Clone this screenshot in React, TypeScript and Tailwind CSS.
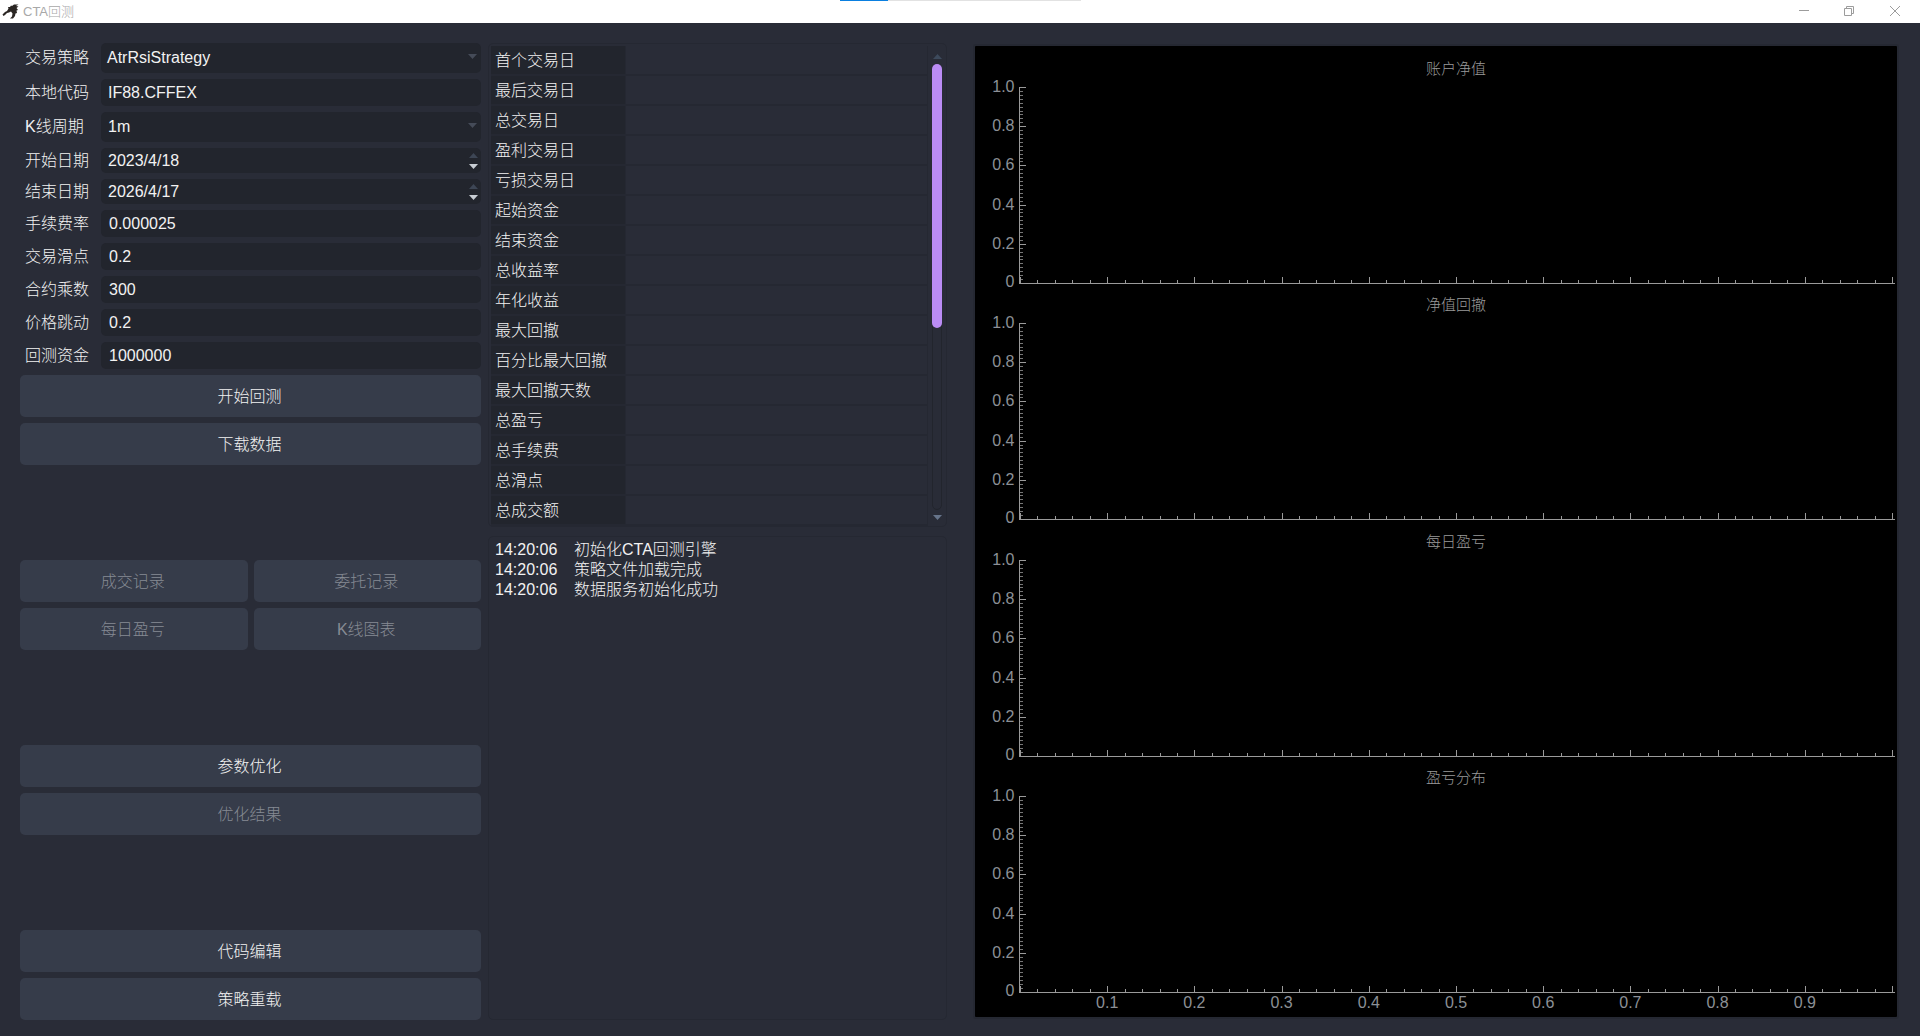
const stats = [
  "首个交易日", "最后交易日", "总交易日", "盈利交易日", "亏损交易日", "起始资金", "结束资金", "总收益率",
  "年化收益", "最大回撤", "百分比最大回撤", "最大回撤天数", "总盈亏", "总手续费", "总滑点", "总成交额",
];

const logs = ["初始化CTA回测引擎", "策略文件加载完成", "数据服务初始化成功"];

const Arrow = ({ down, color }: { down?: boolean; color: string }) => (
  <svg width="9" height="5" viewBox="0 0 9 5">
    <path d={down ? "M0 0h9L4.5 5z" : "M0 5h9L4.5 0z"} fill={color} />
  </svg>
);

// 一行表单：标签 + 输入框
const FormRow = ({
  label,
  value,
  h,
  pad,
  kind,
}: {
  label: string;
  value: string;
  h: string;
  pad: string;
  kind?: "combo" | "spin";
}) => (
  <div className={`flex items-center ${h}`}>
    <div className="w-[81px] pl-[5px]">{label}</div>
    <div className={`flex-1 h-full flex items-center justify-between rounded-[5px] bg-[#22252d] pr-[3px] ${pad}`}>
      <span>{value}</span>
      {kind === "combo" && (
        <span className="mr-[1px] mb-[3px] flex">
          <Arrow down color="#454b58" />
        </span>
      )}
      {kind === "spin" && (
        <span className="flex flex-col gap-[6px]">
          <Arrow color="#3d4655" />
          <Arrow down color="#c8cdd4" />
        </span>
      )}
    </div>
  </div>
);

const Btn = ({ text, disabled }: { text: string; disabled?: boolean }) => (
  <button
    className={`h-[42px] flex-1 rounded-[5px] bg-[#363c4a] pt-[1px] pr-[2px] ${disabled ? "text-[#868b94]" : "text-[#f2f2f2]"}`}
  >
    {text}
  </button>
);

// 一个坐标轴面板，坐标相对面板左上角
const Plot = ({ title, showX, heightClass }: { title: string; showX?: boolean; heightClass: string }) => {
  const x0 = 45;
  const yTop = 41;
  const yBottom = 237;
  const ticks = Array.from({ length: 51 }, (_, i) => i);

  return (
    <div className={`relative ${heightClass}`}>
      <svg width="923" height={showX ? 262 : 238} className="block overflow-visible">
        <text x="481" y="28" textAnchor="middle" fontSize="15" fill="#9a9a9a">
          {title}
        </text>
        <g stroke="#9a9a9a" strokeWidth="1" shapeRendering="crispEdges">
          <line x1={x0 - 0.5} y1={yTop} x2={x0 - 0.5} y2={yBottom + 1} />
          <line x1={x0 - 1} y1={yBottom + 0.5} x2={920} y2={yBottom + 0.5} />
          {ticks.map((i) => {
            const y = Math.round(yBottom - (i * (yBottom - yTop)) / 50) + 0.5;
            const major = i % 10 === 0;
            return <line key={i} x1={x0} y1={y} x2={x0 + (major ? 6 : 3)} y2={y} stroke={major ? "#9a9a9a" : "#767676"} />;
          })}
          {ticks.map((i) => {
            const x = Math.round(x0 + i * 17.44) + 0.5;
            const major = i % 5 === 0;
            return <line key={i} x1={x} y1={yBottom} x2={x} y2={yBottom - (major ? 6 : 3)} />;
          })}
        </g>
        <g fontSize="16" fill="#8c9096">
          {["0", "0.2", "0.4", "0.6", "0.8", "1.0"].map((t, i) => (
            <text key={t} x="39.5" y={i === 0 ? yBottom + 4 : yBottom - i * 39.2 + 5} textAnchor="end">
              {t}
            </text>
          ))}
          {showX &&
            ["0.1", "0.2", "0.3", "0.4", "0.5", "0.6", "0.7", "0.8", "0.9"].map((t, i) => (
              <text key={t} x={x0 + (i + 1) * 87.2} y={yBottom + 15.5} textAnchor="middle">
                {t}
              </text>
            ))}
        </g>
      </svg>
    </div>
  );
};

export default function App() {
  return (
    <div className="w-[1920px] h-[1036px] overflow-hidden flex flex-col bg-[#292c37] text-[16px] font-light leading-[20px] text-[#f2f2f2] font-['Liberation_Sans','Noto_Sans_CJK_SC',sans-serif]">
      {/* 标题栏 */}
      <div className="relative h-[23px] shrink-0 bg-white flex items-center">
        <svg width="17" height="15" viewBox="0 0 17 15" className="ml-[2px]">
          <path
            d="M0.5 10.5 3 8 5 7 6.5 4.5 6 3 8 3 9 1.5 10 2 12 .5 16.5 .5 14 2 16.5 2.5 14.5 4 16 6 14.5 6.5 15 9 13.5 9.5 13 12 11 14.5 8 14.5 10 12.5 10.5 9.5 9 7.5 7 8.5 5 9 3 11 1.5 12z"
            fill="#2b2623"
          />
        </svg>
        <span className="ml-[4px] text-[13px] text-[#a8a8a8]">CTA回测</span>
        <div className="absolute top-0 left-[840px] flex h-[1px]">
          <div className="w-[48px] bg-[#0a7fe0]" />
          <div className="w-[193px] bg-[#e2e2e2]" />
        </div>
        <div className="ml-auto flex items-center">
          <svg width="102" height="12" viewBox="0 0 102 12" className="mr-[19px] mb-[2px]" fill="none" stroke="#9c9c9c">
            <path d="M0 5.5h10" />
            <path d="M45.5 3.5h7v7h-7zM47.5 3V1.5h7v7H53" />
            <path d="M91 1l10 10M101 1 91 11" />
          </svg>
        </div>
      </div>

      {/* 主体 */}
      <div className="flex-1 min-h-0 flex pt-[20px] pb-[16px] pl-[20px]">
        {/* 左侧控制栏 */}
        <div className="w-[461px] shrink-0 flex flex-col">
          <div className="flex flex-col gap-[6px]">
            <FormRow label="交易策略" value="AtrRsiStrategy" h="h-[30px]" pad="pl-[6px]" kind="combo" />
            <FormRow label="本地代码" value="IF88.CFFEX" h="h-[27px]" pad="pl-[7px]" />
            <FormRow label="K线周期" value="1m" h="h-[30px]" pad="pl-[7px]" kind="combo" />
            <FormRow label="开始日期" value="2023/4/18" h="h-[25px]" pad="pl-[7px]" kind="spin" />
            <FormRow label="结束日期" value="2026/4/17" h="h-[25px]" pad="pl-[7px]" kind="spin" />
            <FormRow label="手续费率" value="0.000025" h="h-[27px]" pad="pl-[8px]" />
            <FormRow label="交易滑点" value="0.2" h="h-[27px]" pad="pl-[8px]" />
            <FormRow label="合约乘数" value="300" h="h-[27px]" pad="pl-[8px]" />
            <FormRow label="价格跳动" value="0.2" h="h-[27px]" pad="pl-[8px]" />
            <FormRow label="回测资金" value="1000000" h="h-[27px]" pad="pl-[8px]" />
          </div>
          <div className="mt-[6px] flex flex-col gap-[6px]">
            <div className="flex"><Btn text="开始回测" /></div>
            <div className="flex"><Btn text="下载数据" /></div>
          </div>
          <div className="flex-1" />
          <div className="flex flex-col gap-[6px]">
            <div className="flex gap-[6px]">
              <Btn text="成交记录" disabled />
              <Btn text="委托记录" disabled />
            </div>
            <div className="flex gap-[6px]">
              <Btn text="每日盈亏" disabled />
              <Btn text="K线图表" disabled />
            </div>
          </div>
          <div className="flex-1" />
          <div className="flex flex-col gap-[6px]">
            <div className="flex"><Btn text="参数优化" /></div>
            <div className="flex"><Btn text="优化结果" disabled /></div>
          </div>
          <div className="flex-1" />
          <div className="flex flex-col gap-[6px]">
            <div className="flex"><Btn text="代码编辑" /></div>
            <div className="flex"><Btn text="策略重载" /></div>
          </div>
        </div>

        {/* 中间：统计表 + 日志 */}
        <div className="ml-[7px] w-[459px] shrink-0 flex flex-col gap-[9px]">
          <div className="h-[484px] shrink-0 flex rounded-[5px] border border-[#252832] pl-[2px] pt-[2px]">
            <div className="w-[437px] flex flex-col border-r border-[#252832]">
              {stats.map((s) => (
                <div key={s} className="flex h-[30px] border-b-2 border-[#252832]">
                  <div className="w-[135px] flex items-center pl-[4px] pt-[2px] bg-[#22252d] border-r border-[#252832]">{s}</div>
                </div>
              ))}
            </div>
            <div className="flex-1 flex flex-col items-center pt-[8px]">
              <Arrow color="#3d4a5c" />
              <div className="mt-[5px] w-[10px] h-[446px] rounded-[5px] border border-[#22252d]">
                <div className="-mx-[1px] -mt-[1px] h-[264px] rounded-[5px] bg-[#bb8cf5]" />
              </div>
              <div className="mt-[5px] flex">
                <Arrow down color="#66748a" />
              </div>
            </div>
          </div>
          <div className="flex-1 rounded-[5px] border border-[#252832] pl-[6px] pt-[3px]">
            {logs.map((l) => (
              <div key={l} className="flex">
                <span className="w-[79px]">14:20:06</span>
                <span>{l}</span>
              </div>
            ))}
          </div>
        </div>

        {/* 右侧图表 */}
        <div className="ml-[26px] w-[926px] shrink-0 mb-[1px] mt-[1px] rounded-[3px] border-2 border-[#252832] bg-black flex flex-col">
          <Plot title="账户净值" heightClass="h-[236px]" />
          <Plot title="净值回撤" heightClass="h-[237px]" />
          <Plot title="每日盈亏" heightClass="h-[236px]" />
          <Plot title="盈亏分布" showX heightClass="h-[262px]" />
        </div>
      </div>
    </div>
  );
}
